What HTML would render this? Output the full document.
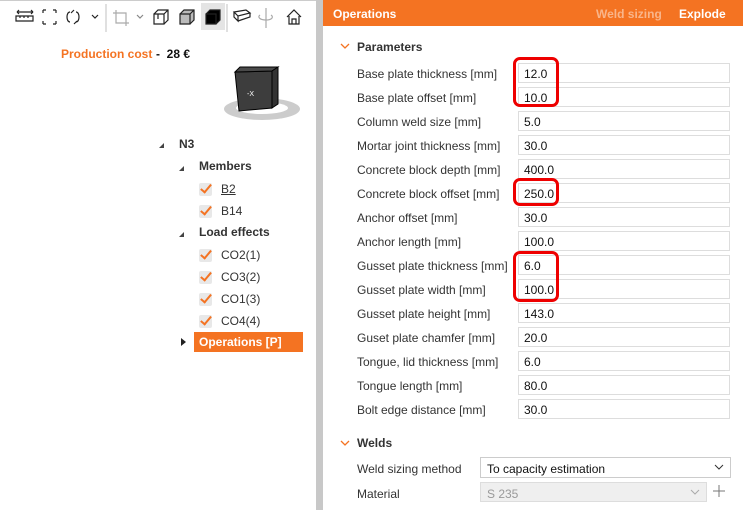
<!DOCTYPE html>
<html><head><meta charset="utf-8"><style>
*{margin:0;padding:0;box-sizing:border-box}
body{width:743px;height:510px;overflow:hidden;background:#fff;font-family:"Liberation Sans",sans-serif;font-size:12px;color:#333;position:relative}
.a{position:absolute}
.lbl{position:absolute;left:357px;color:#333}
.inp{position:absolute;left:518px;width:212px;height:20px;border:1px solid #ddd;background:#fff;padding:3px 0 0 5px;color:#111}
.red{position:absolute;border:3px solid #e00;border-radius:7px;left:513px;width:46px}
.tree{position:absolute}
.chk{position:absolute;width:13px;height:13px;background:#e8e8e8;border-radius:2px}
.chk:after{content:"";position:absolute;left:4px;top:-1px;width:4px;height:9px;border:solid #f47322;border-width:0 2.5px 2.5px 0;transform:rotate(40deg)}
.tri{position:absolute;width:0;height:0;border-left:5px solid transparent;border-bottom:5px solid #444}
</style></head><body>
<div class="a" style="left:0;top:0;width:743px;height:1px;background:#ccc"></div>
<div class="a" style="left:316px;top:0;width:7px;height:510px;background:#c8c8c8"></div>
<svg class="a" style="left:0;top:0" width="316" height="36" fill="none" stroke="#222" stroke-width="1.2">
<path d="M17 12h16M17 12l2-2M17 12l2 2M33 12l-2-2M33 12l-2 2M16 16h17v5H16zM20 16v2M24 16v2M28 16v2"/>
<path d="M43 10h3M43 10v3M56 10h-3M56 10v3M43 24h3M43 24v-3M56 24h-3M56 24v-3"/>
<path d="M70 12c-4 0-4 10 0 10M74 10l-3 3M76 22c4 0 4-10 0-10M74 24l3-3M92 15l3 3 3-3"/>
<path d="M106 4v28" stroke="#ccc"/>
<path d="M116 10v13h13M113 13h13v13" stroke="#aaa"/>
<path d="M137 15l3 3 3-3" stroke="#888"/>
<path d="M154 14h10v10h-10zM154 14l4-4h10v10l-4 4M168 10l-4 4M158 19v-5"/>
<path d="M180 14h10v10h-10zM180 14l4-4h10v10l-4 4M194 10l-4 4" fill="#bbb"/>
<rect x="201" y="3" width="24" height="27" fill="#e4e4e4" stroke="none"/>
<path d="M206 14h10v10h-10zM206 14l4-4h10v10l-4 4" fill="#000"/>
<path d="M227 4v28" stroke="#ccc"/>
<path d="M234 12l12-2 4 3-12 3zM234 12v5l4 4v-5M238 21l12-4v-4"/>
<path d="M266 8v20M260 15c-3 2 0 5 6 5s8-3 5-5" stroke="#aaa"/>
<path d="M287 17l7-7 7 7M289 16v8h10v-8M292 24v-5h4v5"/>
</svg>
<div class="a" style="left:61px;top:47px;font-weight:bold;color:#f47322">Production cost</div>
<div class="a" style="left:156px;top:47px;font-weight:bold;color:#111">-&nbsp; 28 €</div>
<svg class="a" style="left:220px;top:64px" width="92" height="58">
<ellipse cx="42" cy="45" rx="38" ry="11" fill="#ccc"/>
<ellipse cx="42" cy="44" rx="26" ry="6" fill="#fff"/>
<path d="M15 8l37-1v37l-33 3z" fill="#3d3d3d" stroke="#000"/>
<path d="M15 8l5-5h38l-6 4z" fill="#4a4a4a" stroke="#000"/>
<path d="M52 7l6-4v37l-6 4z" fill="#333" stroke="#000"/>
<text x="27" y="32" fill="#fff" font-size="7">-X</text>
</svg>
<div class="tri" style="left:159px;top:143px"></div>
<div class="tree" style="left:179px;top:137px;font-weight:bold">N3</div>
<div class="tri" style="left:179px;top:166px"></div>
<div class="tree" style="left:199px;top:159px;font-weight:bold">Members</div>
<div class="chk" style="left:199px;top:183px"></div><div class="tree" style="left:221px;top:182px;text-decoration:underline">B2</div>
<div class="chk" style="left:199px;top:205px"></div><div class="tree" style="left:221px;top:204px">B14</div>
<div class="tri" style="left:179px;top:232px"></div>
<div class="tree" style="left:199px;top:225px;font-weight:bold">Load effects</div>
<div class="chk" style="left:199px;top:249px"></div><div class="tree" style="left:221px;top:248px">CO2(1)</div>
<div class="chk" style="left:199px;top:271px"></div><div class="tree" style="left:221px;top:270px">CO3(2)</div>
<div class="chk" style="left:199px;top:293px"></div><div class="tree" style="left:221px;top:292px">CO1(3)</div>
<div class="chk" style="left:199px;top:315px"></div><div class="tree" style="left:221px;top:314px">CO4(4)</div>
<div class="a" style="left:181px;top:338px;border-top:4px solid transparent;border-bottom:4px solid transparent;border-left:5px solid #222"></div>
<div class="a" style="left:194px;top:332px;width:109px;height:20px;background:#f47322;color:#fff;font-weight:bold;padding:3px 0 0 5px">Operations [P]</div>
<div class="a" style="left:323px;top:0;width:420px;height:26px;background:#f47322"></div>
<div class="a" style="left:333px;top:7px;color:#fff;font-weight:bold">Operations</div>
<div class="a" style="left:596px;top:7px;color:#f9b58a;font-weight:bold">Weld sizing</div>
<div class="a" style="left:679px;top:7px;color:#fff;font-weight:bold">Explode</div>
<svg class="a" style="left:340px;top:43px" width="12" height="8"><path d="M1 1l4 4 4-4" stroke="#f47322" fill="none" stroke-width="1.3"/></svg>
<div class="a" style="left:357px;top:40px;font-weight:bold">Parameters</div>
<div class="lbl" style="top:67px">Base plate thickness [mm]</div><div class="inp" style="top:63px">12.0</div>
<div class="lbl" style="top:91px">Base plate offset [mm]</div><div class="inp" style="top:87px">10.0</div>
<div class="lbl" style="top:115px">Column weld size [mm]</div><div class="inp" style="top:111px">5.0</div>
<div class="lbl" style="top:139px">Mortar joint thickness [mm]</div><div class="inp" style="top:135px">30.0</div>
<div class="lbl" style="top:163px">Concrete block depth [mm]</div><div class="inp" style="top:159px">400.0</div>
<div class="lbl" style="top:187px">Concrete block offset [mm]</div><div class="inp" style="top:183px">250.0</div>
<div class="lbl" style="top:211px">Anchor offset [mm]</div><div class="inp" style="top:207px">30.0</div>
<div class="lbl" style="top:235px">Anchor length [mm]</div><div class="inp" style="top:231px">100.0</div>
<div class="lbl" style="top:259px">Gusset plate thickness [mm]</div><div class="inp" style="top:255px">6.0</div>
<div class="lbl" style="top:283px">Gusset plate width [mm]</div><div class="inp" style="top:279px">100.0</div>
<div class="lbl" style="top:307px">Gusset plate height [mm]</div><div class="inp" style="top:303px">143.0</div>
<div class="lbl" style="top:331px">Guset plate chamfer [mm]</div><div class="inp" style="top:327px">20.0</div>
<div class="lbl" style="top:355px">Tongue, lid thickness [mm]</div><div class="inp" style="top:351px">6.0</div>
<div class="lbl" style="top:379px">Tongue length [mm]</div><div class="inp" style="top:375px">80.0</div>
<div class="lbl" style="top:403px">Bolt edge distance [mm]</div><div class="inp" style="top:399px">30.0</div>
<div class="red" style="top:57px;height:50px"></div>
<div class="red" style="top:178px;height:28px"></div>
<div class="red" style="top:251px;height:51px"></div>
<svg class="a" style="left:340px;top:440px" width="12" height="8"><path d="M1 1l4 4 4-4" stroke="#f47322" fill="none" stroke-width="1.3"/></svg>
<div class="a" style="left:357px;top:436px;font-weight:bold">Welds</div>
<div class="lbl" style="top:462px">Weld sizing method</div>
<div class="a" style="left:480px;top:457px;width:251px;height:21px;border:1px solid #ccc;padding:4px 0 0 6px;color:#111">To capacity estimation</div>
<svg class="a" style="left:714px;top:464px" width="10" height="7"><path d="M1 1l4 4 4-4" stroke="#333" fill="none"/></svg>
<div class="lbl" style="top:487px">Material</div>
<div class="a" style="left:480px;top:482px;width:227px;height:20px;border:1px solid #ddd;background:#efefef;padding:4px 0 0 6px;color:#999">S 235</div>
<svg class="a" style="left:690px;top:489px" width="10" height="7"><path d="M1 1l4 4 4-4" stroke="#aaa" fill="none"/></svg>
<svg class="a" style="left:713px;top:485px" width="12" height="12"><path d="M6 0v12M0 6h12" stroke="#777"/></svg>
</body></html>
